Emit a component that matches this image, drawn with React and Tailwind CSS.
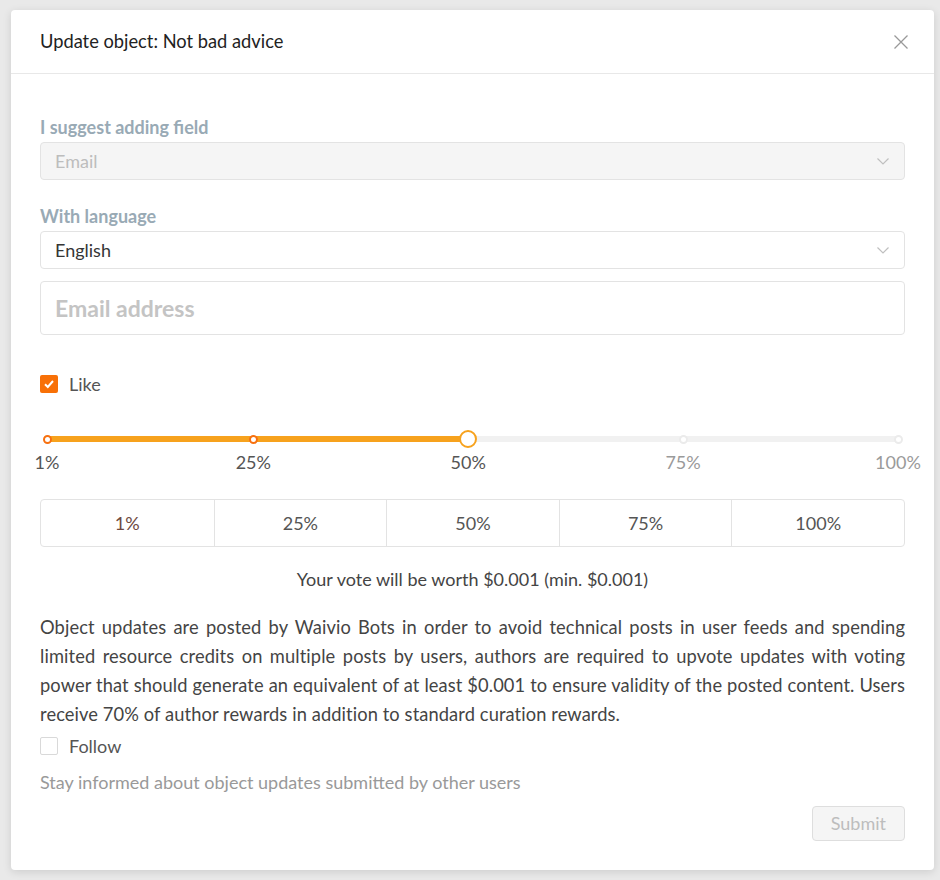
import React, { useState } from 'react'

const marks = [1, 25, 50, 75, 100]

function Chevron(){
  return (
    <svg width="14" height="14" viewBox="0 0 14 14" fill="none" className="text-[#bfbfbf]">
      <path d="M1.5 4.5 L7 10 L12.5 4.5" stroke="currentColor" strokeWidth="1.2" />
    </svg>
  )
}

function Check({checked, onToggle, label}){
  return (
    <label className="h-6 flex items-center gap-[11px] cursor-pointer" onClick={onToggle}>
      <span className={`w-[18px] h-[18px] rounded-[2px] flex items-center justify-center ${checked ? 'bg-[#f87007]' : 'border border-[#d9d9d9] bg-white'}`}>
        {checked && (
          <svg width="12" height="12" viewBox="0 0 12 12" fill="none">
            <path d="M2 6.2 L4.8 9 L10 3" stroke="white" strokeWidth="2" />
          </svg>
        )}
      </span>
      <span className="text-[18px] text-[#555]">{label}</span>
    </label>
  )
}

function VoteSlider({value}){
  const pos = v => ((v - 1) / 99) * 100
  return (
    <div className="relative h-[60px] mx-[7px] mt-[24px]">
      <div className="absolute left-0 right-0 top-[16px] h-[6px] rounded-full bg-[#f1f1f1]" />
      <div className="absolute left-0 top-[16px] h-[6px] rounded-full bg-[#f7a21d]" style={{width: pos(value) + '%'}} />
      {marks.map(m => {
        const active = m <= value
        const isHandle = m === value
        return (
          <div key={m}>
            {isHandle ? (
              <div className="absolute top-[10px] w-[18px] h-[18px] -ml-[9px] rounded-full bg-white border-2 border-[#f7a21d]" style={{left: pos(m) + '%'}} />
            ) : (
              <div className={`absolute top-[15px] w-[9px] h-[9px] -ml-[4.5px] rounded-full bg-white border-2 ${active ? 'border-[#f7700f]' : 'border-[#ebebeb]'}`} style={{left: pos(m) + '%'}} />
            )}
            <div className={`absolute top-[30px] -translate-x-1/2 text-[18px] leading-6 ${active ? 'text-[#555]' : 'text-[#9a9a9a]'}`} style={{left: pos(m) + '%'}}>{m}%</div>
          </div>
        )
      })}
    </div>
  )
}

export default function App(){
  const [like, setLike] = useState(true)
  const [follow, setFollow] = useState(false)
  return (
    <div className="min-h-[880px] bg-[#e9e9e9] pt-[10px] pl-[11px]" style={{fontFamily: 'Lato, "Open Sans", sans-serif'}}>
      <div className="w-[923px] bg-white rounded-[4px] shadow-[0_2px_8px_rgba(0,0,0,0.12)]">
        <div className="h-[64px] flex items-center justify-between px-[29px] border-b border-[#e8e8e8]">
          <h1 className="text-[18.3px] text-[#222]">Update object: Not bad advice</h1>
          <button className="text-[#999] -mr-[4px]">
            <svg width="16" height="16" viewBox="0 0 16 16" fill="none">
              <path d="M1.5 1.5 L14.5 14.5 M14.5 1.5 L1.5 14.5" stroke="currentColor" strokeWidth="1.3" />
            </svg>
          </button>
        </div>

        <div className="px-[29px] pt-[41px] pb-[29px]">
          <div className="text-[18px] leading-6 font-bold text-[#99aab5]">I suggest adding field</div>
          <div className="mt-[3px] h-[38px] flex items-center justify-between px-[14px] bg-[#f5f5f5] border border-[#e3e3e3] rounded-[4px]">
            <span className="text-[18px] text-[#bdbdbd]">Email</span>
            <Chevron />
          </div>

          <div className="mt-[24px] text-[18px] leading-6 font-bold text-[#99aab5]">With language</div>
          <div className="mt-[3px] h-[38px] flex items-center justify-between px-[14px] bg-white border border-[#e3e3e3] rounded-[4px]">
            <span className="text-[18px] text-[#353535]">English</span>
            <Chevron />
          </div>

          <div className="mt-[12px] h-[54px] flex items-center px-[14px] border border-[#e3e3e3] rounded-[4px]">
            <span className="text-[23px] font-bold text-[#c4c4c4]">Email address</span>
          </div>

          <div className="mt-[37px]">
            <Check checked={like} onToggle={() => setLike(!like)} label="Like" />
          </div>

          <VoteSlider value={50} />

          <div className="mt-[19px] h-[48px] grid grid-cols-5 border border-[#e3e3e3] rounded-[4px]">
            {marks.map((m, i) => (
              <div key={m} className={`flex items-center justify-center text-[18px] ${m === 1 ? 'text-[#6e4a42]' : 'text-[#555]'} ${i > 0 ? 'border-l border-[#e3e3e3]' : ''}`}>{m}%</div>
            ))}
          </div>

          <div className="mt-[20px] text-center text-[18px] leading-6 text-[#444]">Your vote will be worth $0.001 (min. $0.001)</div>

          <p className="mt-[22px] text-[18.3px] leading-[29px] tracking-[0.1px] text-[#444] text-justify">
            Object updates are posted by Waivio Bots in order to avoid technical posts in user feeds and spending limited resource credits on multiple posts by users, authors are required to upvote updates with voting power that should generate an equivalent of at least $0.001 to ensure validity of the posted content. Users receive 70% of author rewards in addition to standard curation rewards.
          </p>

          <div className="mt-[5px]">
            <Check checked={follow} onToggle={() => setFollow(!follow)} label="Follow" />
          </div>

          <div className="mt-[12px] text-[18px] leading-6 text-[#999]">Stay informed about object updates submitted by other users</div>

          <div className="mt-[12px] flex justify-end">
            <button className="h-[35px] px-[18px] bg-[#f5f5f5] border border-[#dedede] rounded-[4px] text-[18px] text-[#bdbdbd]" disabled>Submit</button>
          </div>
        </div>
      </div>
    </div>
  )
}
